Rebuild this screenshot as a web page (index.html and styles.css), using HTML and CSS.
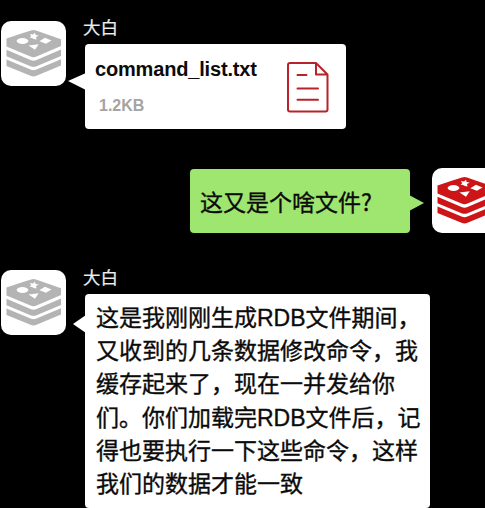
FILE: index.html
```
<!DOCTYPE html>
<html lang="zh-CN">
<head>
<meta charset="utf-8">
<title>聊天</title>
<link rel="stylesheet" href="styles.css">
</head>
<body>
<svg width="0" height="0" class="defs" aria-hidden="true">
  <symbol id="stack" viewBox="0 0 65 65">
    <path fill="currentColor" d="M5.500 17.500 Q19 13 30 9.600 Q32.500 8.600 35 9.600 L60 18.200 V25 L35.500 35.500 Q32.500 37 29.500 35.500 L5.500 25.500Z"/>
    <path fill="currentColor" d="M5.500 28.800 L29.500 39 Q32.500 40.300 35.500 39 L60 28.500 V35 L35.500 45.200 Q32.500 46.500 29.500 45.200 L5.500 35.300Z"/>
    <path fill="currentColor" d="M5.500 38.500 L29.500 48.500 Q32.500 49.800 35.500 48.500 L60 38.300 V44.500 L35.500 54.800 Q32.500 56.200 29.500 54.800 L5.500 45Z"/>
    <g fill="#fff">
      <ellipse cx="21.500" cy="20" rx="5.900" ry="2.900"/>
      <path d="M33 18 L30.400 16.700 L28.600 17 L30.200 15 L28.800 12.900 L32 13.600 L34 11.800 L34.600 13.900 L37.800 14.500 L35 15.900 L35.500 18.500Z"/>
      <path d="M38.300 20.200 L44 16.800 L50.500 19.500 L45 22.800Z"/>
      <path d="M27.500 24.400 L37.700 23.300 L34 28.700Z"/>
    </g>
  </symbol>
</svg>
<main class="chat">
  <section class="message message-file">
    <div class="avatar"><svg><use href="#stack"/></svg></div>
    <div class="content">
      <div class="name">大白</div>
      <div class="bubble file">
        <div class="file-info">
          <div class="file-name">command_list.txt</div>
          <div class="file-size">1.2KB</div>
        </div>
        <svg class="file-icon" viewBox="0 0 42 51" fill="none" stroke="#b8222b" stroke-width="2" stroke-linejoin="round" stroke-linecap="round">
          <path d="M3 1 H29 L40.500 12.500 V47.500 Q40.500 49.500 38.500 49.500 H3 Q1 49.500 1 47.500 V3 Q1 1 3 1Z M29 1 V12.500 H40.500 M10.500 13 H19.500 M10.500 26.500 H31 M10.500 37.700 H31"/>
        </svg>
      </div>
    </div>
  </section>
  <section class="message message-own">
    <div class="bubble own">这又是个啥文件<span class="question">?</span></div>
    <div class="avatar avatar-red"><svg><use href="#stack"/></svg></div>
  </section>
  <section class="message message-long">
    <div class="avatar"><svg><use href="#stack"/></svg></div>
    <div class="content">
      <div class="name">大白</div>
      <div class="bubble text">这是我刚刚生成RDB文件期间，<br>又收到的几条数据修改命令，我<br>缓存起来了，现在一并发给你<br>们。你们加载完RDB文件后，记<br>得也要执行一下这些命令，这样<br>我们的数据才能一致</div>
    </div>
  </section>
</main>
</body>
</html>
```
FILE: styles.css
```
* { box-sizing: border-box; }
body {
  margin: 0;
  background: #000;
  color: #0b0b0b;
  font-family: "Liberation Sans", "Noto Sans CJK SC", sans-serif;
}
.defs { display: none; }
.chat {
  width: 485px;
  height: 508px;
  overflow: hidden;
  padding: 16px 0 0 1px;
}
.message { display: flex; align-items: flex-start; }
.message-file { height: 152px; gap: 19px; }
.message-own { height: 98px; gap: 22px; padding-left: 189px; }
.message-long { gap: 19px; }
.avatar {
  flex: none;
  width: 65px;
  height: 65px;
  border-radius: 10px;
  background: #fff;
  color: #b4b4b4;
}
.avatar svg { display: block; width: 65px; height: 65px; }
.message-file .avatar { margin-top: 5px; }
.message-long .avatar { margin-top: 4px; }
.avatar-red { color: #cd1517; }
.name {
  height: 28px;
  margin-left: -2px;
  color: #ededed;
  font-size: 17.5px;
  line-height: 24px;
  -webkit-text-stroke: .2px;
}
.bubble {
  position: relative;
  flex: none;
  border-radius: 4px;
  background: #fff;
}
.bubble::before {
  content: "";
  position: absolute;
  left: -17px;
  top: 29px;
  width: 18px;
  height: 17px;
  background: inherit;
  clip-path: polygon(100% 0, 100% 100%, 0 47%);
}
.file {
  display: flex;
  justify-content: space-between;
  width: 261px;
  height: 85px;
  padding: 18px 17px 0 10px;
}
.file-name {
  font-size: 20px;
  font-weight: bold;
  line-height: 14px;
  letter-spacing: -.17px;
  white-space: nowrap;
}
.file-size {
  margin: 20px 0 0 4px;
  color: #a4a4a4;
  font-size: 16px;
  font-weight: bold;
  line-height: 20px;
}
.file-icon { width: 42px; height: 51px; }
.own {
  width: 220px;
  height: 64px;
  margin-top: 1px;
  padding-left: 10px;
  background: #9fe671;
  font-size: 23px;
  line-height: 65px;
  -webkit-text-stroke: .35px;
}
.own::before {
  left: 219px;
  top: 26px;
  width: 15px;
  height: 16px;
  clip-path: polygon(0 0, 100% 50%, 0 100%);
}
.question { font-family: "Noto Sans CJK SC", sans-serif; }
.text {
  width: 345px;
  height: 214px;
  padding: 8px 0 0 11px;
  font-size: 23px;
  line-height: 33.2px;
  white-space: nowrap;
  -webkit-text-stroke: .35px;
}
.text::before {
  left: -12px;
  top: 21px;
  width: 13px;
  height: 18px;
  clip-path: polygon(100% 0, 100% 100%, 0 50%);
}
```
